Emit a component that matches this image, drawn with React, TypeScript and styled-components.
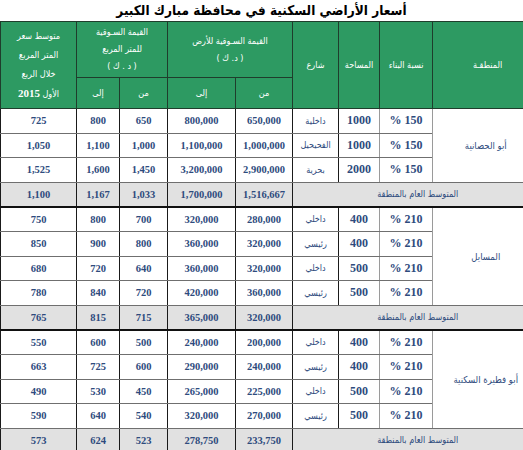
import styled, { createGlobalStyle } from "styled-components"

const GlobalStyle = createGlobalStyle`
  html, body {
    margin: 0;
    padding: 0;
    background: #fff;
    overflow: hidden;
  }
`

const arabic = `"DejaVu Sans Condensed", "DejaVu Sans", sans-serif`

const Page = styled.div`
  width: 523px;
  height: 450px;
  overflow: hidden;
  direction: ltr;
  font-family: ${arabic};
`

const Title = styled.h1`
  margin: 0;
  height: 21px;
  line-height: 21px;
  font-size: 13.5px;
  font-weight: 700;
  color: #000;
  text-align: center;
  direction: rtl;
`

const Table = styled.table`
  direction: rtl;
  width: 542px;
  border-collapse: collapse;
  table-layout: fixed;
`

const Th = styled.th`
  background: #2d9a62;
  color: #fff;
  font-size: 9px;
  font-weight: 400;
  line-height: 17px;
  text-align: center;
  vertical-align: middle;
  padding: 0;
  border: 1px solid #1f3d2c;
`

const Year = styled.span`
  font-family: "Liberation Serif", serif;
  font-weight: 700;
  font-size: 11px;
`

const Row = styled.tr<{ $summary?: boolean }>`
  height: 24.6px;
  background: ${p => (p.$summary ? "#e1e1e1" : "#fff")};
`

const Cell = styled.td<{ $grey?: boolean; $big?: boolean; $summary?: boolean }>`
  padding: 0;
  text-align: center;
  vertical-align: middle;
  color: #2e4b7d;
  font-family: "Liberation Serif", serif;
  font-weight: 700;
  font-size: ${p => (p.$big ? "12px" : "10.5px")};
  border-right: none;
  border-left: 1px solid ${p => (p.$grey ? "#9a9a9a" : "#1a1a1a")};
  border-top: ${p => (p.$summary ? "1px solid #333" : "none")};
  border-bottom: ${p => (p.$summary ? "2px solid #111" : "1px solid #6f6f6f")};
`

const TextCell = styled(Cell)`
  font-family: ${arabic};
  font-weight: 400;
  font-size: 9px;
`

const NameCell = styled(TextCell)`
  font-size: 9.5px;
  padding-right: 4px;
`

interface Item {
  ratio: string
  area: string
  street: string
  landFrom: string
  landTo: string
  meterFrom: string
  meterTo: string
  avg: string
}

interface Group {
  name: string
  rows: Item[]
  land: [string, string]
  meter: [string, string]
  avg: string
}

const groups: Group[] = [
  {
    name: "أبو الحصانية",
    rows: [
      { ratio: "150 %", area: "1000", street: "داخلية", landFrom: "650,000", landTo: "800,000", meterFrom: "650", meterTo: "800", avg: "725" },
      { ratio: "150 %", area: "1000", street: "الفحيحيل", landFrom: "1,000,000", landTo: "1,100,000", meterFrom: "1,000", meterTo: "1,100", avg: "1,050" },
      { ratio: "150 %", area: "2000", street: "بحرية", landFrom: "2,900,000", landTo: "3,200,000", meterFrom: "1,450", meterTo: "1,600", avg: "1,525" },
    ],
    land: ["1,516,667", "1,700,000"],
    meter: ["1,033", "1,167"],
    avg: "1,100",
  },
  {
    name: "المسايل",
    rows: [
      { ratio: "210 %", area: "400", street: "داخلي", landFrom: "280,000", landTo: "320,000", meterFrom: "700", meterTo: "800", avg: "750" },
      { ratio: "210 %", area: "400", street: "رئيسي", landFrom: "320,000", landTo: "360,000", meterFrom: "800", meterTo: "900", avg: "850" },
      { ratio: "210 %", area: "500", street: "داخلي", landFrom: "320,000", landTo: "360,000", meterFrom: "640", meterTo: "720", avg: "680" },
      { ratio: "210 %", area: "500", street: "رئيسي", landFrom: "360,000", landTo: "420,000", meterFrom: "720", meterTo: "840", avg: "780" },
    ],
    land: ["320,000", "365,000"],
    meter: ["715", "815"],
    avg: "765",
  },
  {
    name: "أبو فطيرة السكنية",
    rows: [
      { ratio: "210 %", area: "400", street: "داخلي", landFrom: "200,000", landTo: "240,000", meterFrom: "500", meterTo: "600", avg: "550" },
      { ratio: "210 %", area: "400", street: "رئيسي", landFrom: "240,000", landTo: "290,000", meterFrom: "600", meterTo: "725", avg: "663" },
      { ratio: "210 %", area: "500", street: "داخلي", landFrom: "225,000", landTo: "265,000", meterFrom: "450", meterTo: "530", avg: "490" },
      { ratio: "210 %", area: "500", street: "رئيسي", landFrom: "270,000", landTo: "320,000", meterFrom: "540", meterTo: "640", avg: "590" },
    ],
    land: ["233,750", "278,750"],
    meter: ["523", "624"],
    avg: "573",
  },
]

// column widths, right to left
const widths = [110, 53, 41, 46, 57, 68, 48, 43, 76]

const GroupRows = ({ group }: { group: Group }) => (
  <>
    {group.rows.map((r, i) => (
      <Row key={i}>
        {i === 0 && (
          <NameCell $grey rowSpan={group.rows.length}>
            {group.name}
          </NameCell>
        )}
        <Cell $grey $big>{r.ratio}</Cell>
        <Cell $big>{r.area}</Cell>
        <TextCell>{r.street}</TextCell>
        <Cell>{r.landFrom}</Cell>
        <Cell>{r.landTo}</Cell>
        <Cell>{r.meterFrom}</Cell>
        <Cell>{r.meterTo}</Cell>
        <Cell>{r.avg}</Cell>
      </Row>
    ))}
    <Row $summary>
      <TextCell $summary colSpan={4}>المتوسط العام بالمنطقة</TextCell>
      <Cell $summary>{group.land[0]}</Cell>
      <Cell $summary>{group.land[1]}</Cell>
      <Cell $summary>{group.meter[0]}</Cell>
      <Cell $summary>{group.meter[1]}</Cell>
      <Cell $summary>{group.avg}</Cell>
    </Row>
  </>
)

export default function App() {
  return (
    <Page>
      <GlobalStyle />
      <Title>أسعار الأراضي السكنية في محافظة مبارك الكبير</Title>
      <Table>
        <colgroup>
          {widths.map((w, i) => (
            <col key={i} style={{ width: w }} />
          ))}
        </colgroup>
        <thead>
          <tr style={{ height: 56 }}>
            <Th rowSpan={2}>المنطقـة</Th>
            <Th rowSpan={2}>نسبة البناء</Th>
            <Th rowSpan={2}>المساحة</Th>
            <Th rowSpan={2}>شارع</Th>
            <Th colSpan={2}>القيمة السـوقية للأرض<br />( د. ك )</Th>
            <Th colSpan={2}>القيمة السـوقية<br />للمتر المربع<br />( د . ك )</Th>
            <Th rowSpan={2} style={{ lineHeight: "19px" }}>
              متوسط سعر<br />المتر المربع<br />خلال الربع<br />الأول <Year>2015</Year>
            </Th>
          </tr>
          <tr style={{ height: 31 }}>
            <Th>من</Th>
            <Th>إلى</Th>
            <Th>من</Th>
            <Th>إلى</Th>
          </tr>
        </thead>
        <tbody>
          {groups.map((g, i) => (
            <GroupRows key={i} group={g} />
          ))}
        </tbody>
      </Table>
    </Page>
  )
}
